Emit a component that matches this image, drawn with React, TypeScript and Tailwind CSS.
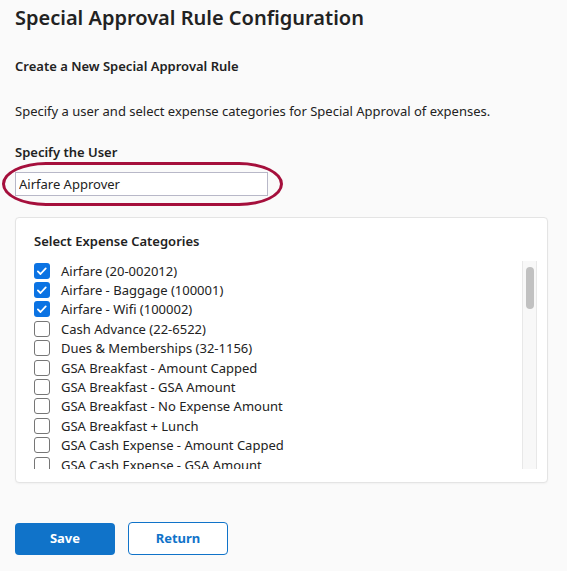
import React from 'react'

const categories = [
  { label: 'Airfare (20-002012)', checked: true },
  { label: 'Airfare - Baggage (100001)', checked: true },
  { label: 'Airfare - Wifi (100002)', checked: true },
  { label: 'Cash Advance (22-6522)', checked: false },
  { label: 'Dues & Memberships (32-1156)', checked: false },
  { label: 'GSA Breakfast - Amount Capped', checked: false },
  { label: 'GSA Breakfast - GSA Amount', checked: false },
  { label: 'GSA Breakfast - No Expense Amount', checked: false },
  { label: 'GSA Breakfast + Lunch', checked: false },
  { label: 'GSA Cash Expense - Amount Capped', checked: false },
  { label: 'GSA Cash Expense - GSA Amount', checked: false },
]

const CheckBox: React.FC<{ checked: boolean }> = ({ checked }) =>
  checked ? (
    <span className="flex h-4 w-4 shrink-0 items-center justify-center rounded-[3px] bg-[#0b73e3]">
      <svg viewBox="0 0 16 16" className="h-3 w-3" fill="none">
        <path d="M2.5 8.5l3.5 3.5 7-7.5" stroke="white" strokeWidth="2.4" strokeLinecap="round" strokeLinejoin="round" />
      </svg>
    </span>
  ) : (
    <span className="h-4 w-4 shrink-0 rounded-[3px] border border-[#767676] bg-white" />
  )

export default function App() {
  return (
    <div className="min-h-[571px] bg-[#fafafa] px-[15px] pt-[5px] text-[#222] font-['Noto_Sans',sans-serif]">
      <h1 className="text-[20px] font-semibold leading-[26px] text-[#222]">Special Approval Rule Configuration</h1>

      <h2 className="mt-[25px] text-[13px] font-semibold leading-[20px]">Create a New Special Approval Rule</h2>

      <p className="mt-[25px] text-[13px] leading-[20px]">
        Specify a user and select expense categories for Special Approval of expenses.
      </p>

      <label className="mt-[21px] block text-[13px] font-semibold leading-[20px]">Specify the User</label>

      <div className="relative mt-[9px] w-[253px]">
        <input
          readOnly
          value="Airfare Approver"
          className="h-[24px] w-full border border-[#b8b8c8] bg-white px-[3px] text-[13px] text-[#222] outline-none"
        />
        <div className="pointer-events-none absolute -left-[13px] -right-[15px] -top-[9px] -bottom-[10px] rounded-[44px/22px] border-[3px] border-[#a50f3c]" />
      </div>

      <div className="mt-[21px] h-[266px] w-[533px] rounded-[4px] border border-[#e4e4e4] bg-white pl-[18px] pr-[10px] pt-[14px] shadow-[0_1px_2px_rgba(0,0,0,0.04)]">
        <h3 className="text-[13px] font-semibold leading-[18px]">Select Expense Categories</h3>

        <div className="mt-[11px] flex h-[208px]">
          <ul className="flex-1 overflow-hidden">
            {categories.map((c) => (
              <li key={c.label} className="flex h-[19.4px] items-center gap-[11px] text-[13px] text-[#222]">
                <CheckBox checked={c.checked} />
                <span className="leading-[18px]">{c.label}</span>
              </li>
            ))}
          </ul>
          <div className="flex w-[15px] justify-center border-x border-[#e8e8e8] bg-[#f8f8f8] pt-[6px]">
            <div className="h-[42px] w-[8px] rounded-full bg-[#c1c1c1]" />
          </div>
        </div>
      </div>

      <div className="mt-[39px] flex items-center gap-[13px]">
        <button className="h-[32px] w-[100px] rounded-[4px] bg-[#1073c9] text-[13px] font-bold text-white">Save</button>
        <button className="h-[33px] w-[100px] rounded-[4px] border border-[#1073c9] bg-white text-[13px] font-bold text-[#1073c9]">
          Return
        </button>
      </div>
    </div>
  )
}
